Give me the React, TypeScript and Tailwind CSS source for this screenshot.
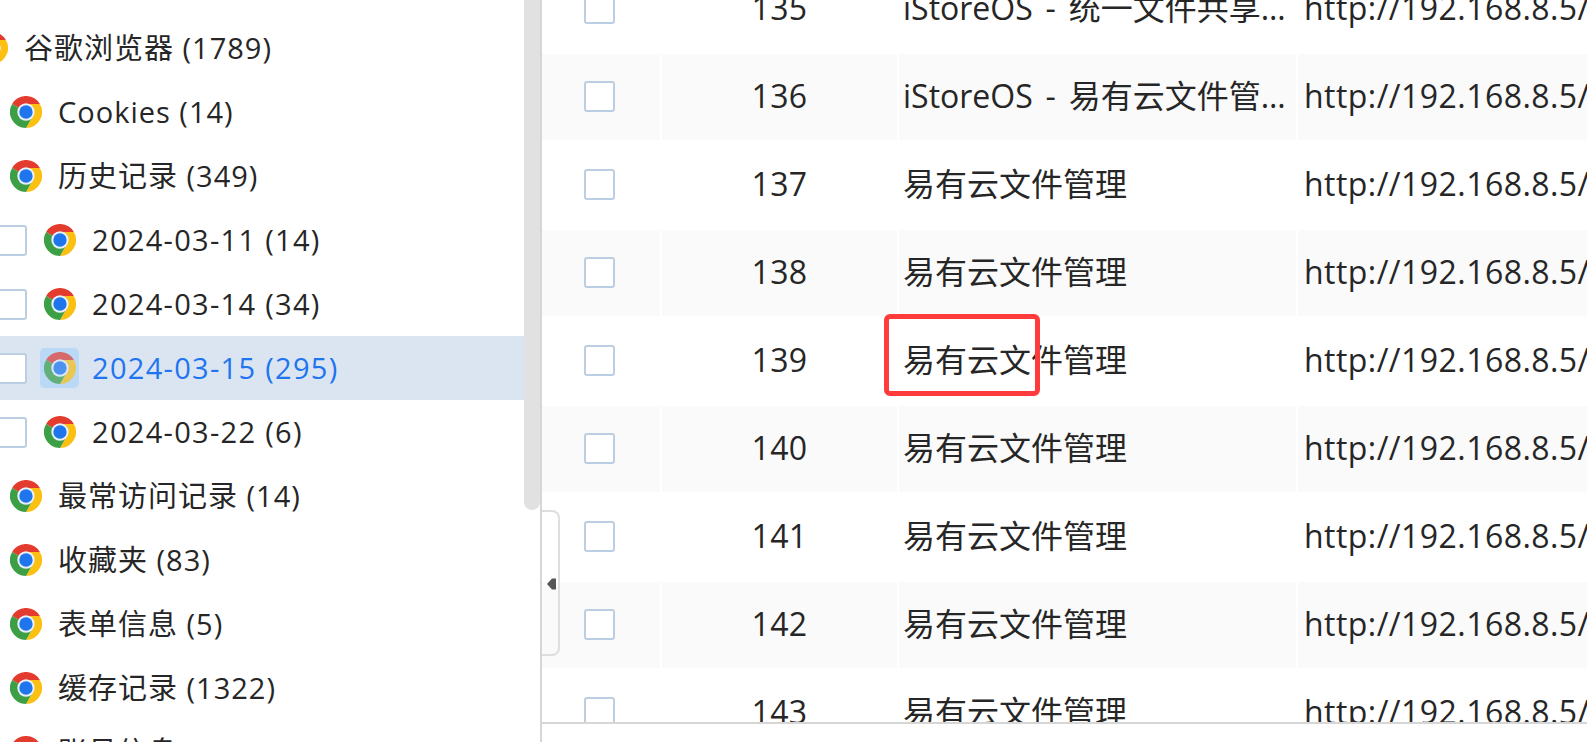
const FONT = "font-['Open_Sans','Noto_Sans_CJK_SC',sans-serif]"

function ChromeIcon() {
  return (
    <svg viewBox="0 0 48 48" className="h-8 w-8 shrink-0" aria-hidden="true">
      <path d="M3.2 12A24 24 0 0 1 44.8 12H24A12 12 0 0 0 13.6 18Z" fill="#e33b2e" />
      <path d="M44.8 12A24 24 0 0 1 24 48L34.4 30A12 12 0 0 0 24 12Z" fill="#fcc012" />
      <path d="M24 48A24 24 0 0 1 3.2 12L13.6 18A12 12 0 0 0 34.4 30Z" fill="#3c9f46" />
      <circle cx="24" cy="24" r="13" fill="#e8f0fa" />
      <circle cx="24" cy="24" r="10" fill="#1f75ec" />
    </svg>
  )
}

function Checkbox({ className = '' }: { className?: string }) {
  return <span className={`block h-[31px] w-[31px] shrink-0 rounded-[3px] border-2 border-[#bccfe2] bg-white ${className}`} />
}

type TreeRow = { label: string; level: 0 | 1 | 2; selected?: boolean }

const treeRows: TreeRow[] = [
  { label: '系统 (2036)', level: 0 },
  { label: '谷歌浏览器 (1789)', level: 0 },
  { label: 'Cookies (14)', level: 1 },
  { label: '历史记录 (349)', level: 1 },
  { label: '2024-03-11 (14)', level: 2 },
  { label: '2024-03-14 (34)', level: 2 },
  { label: '2024-03-15 (295)', level: 2, selected: true },
  { label: '2024-03-22 (6)', level: 2 },
  { label: '最常访问记录 (14)', level: 1 },
  { label: '收藏夹 (83)', level: 1 },
  { label: '表单信息 (5)', level: 1 },
  { label: '缓存记录 (1322)', level: 1 },
  { label: '账号信息 (8)', level: 1 },
]

function Tree() {
  return (
    <div className="-mt-[48px]">
      {treeRows.map((r) => (
        <div key={r.label} className={`flex h-16 items-center text-[29px] whitespace-nowrap ${r.level === 2 ? 'tracking-[1.3px]' : 'tracking-[1px]'} ${r.selected ? 'bg-[#dbe5f1] text-[#1f74f0]' : 'text-[#262626]'}`}>
          {r.level === 0 && (
            <span className="-ml-6 mr-4 flex">
              <ChromeIcon />
            </span>
          )}
          {r.level === 1 && (
            <span className="ml-2.5 mr-4 flex">
              <ChromeIcon />
            </span>
          )}
          {r.level === 2 && (
            <>
              <Checkbox className="-ml-1" />
              <span className={`ml-[13px] mr-[13px] flex h-10 w-[39px] items-center justify-center rounded-[5px] ${r.selected ? 'bg-[#b9d9f6]' : ''}`}>
                <span className={`flex ${r.selected ? 'opacity-70' : ''}`}>
                  <ChromeIcon />
                </span>
              </span>
            </>
          )}
          <span>{r.label}</span>
        </div>
      ))}
    </div>
  )
}

const tableRows = [
  { id: 135, title: 'iStoreOS - 统一文件共享 - 文件管理' },
  { id: 136, title: 'iStoreOS - 易有云文件管理系统' },
  { id: 137, title: '易有云文件管理' },
  { id: 138, title: '易有云文件管理' },
  { id: 139, title: '易有云文件管理' },
  { id: 140, title: '易有云文件管理' },
  { id: 141, title: '易有云文件管理' },
  { id: 142, title: '易有云文件管理' },
  { id: 143, title: '易有云文件管理' },
]

function Table() {
  return (
    <div className="-mt-[35px]">
      {tableRows.map((r, i) => {
        const cell = `flex h-full items-center pb-0.5 ${i % 2 === 1 ? 'bg-[#fafafa]' : ''}`
        return (
          <div key={r.id} className="grid h-[88px] grid-cols-[120px_237px_399px_1fr] border-y border-white text-[32px] text-[#262626]">
            <div className={`${cell} justify-center border-r-2 border-white`}>
              <Checkbox className="-ml-1" />
            </div>
            <div className={`${cell} justify-center border-r-2 border-white tracking-[0.3px]`}>{r.id}</div>
            <div className={`${cell} min-w-0 border-r-2 border-white pl-1 pr-1`}>
              <span className="truncate [word-spacing:4.5px]">{r.title}</span>
            </div>
            <div className={`${cell} overflow-hidden pl-1.5 tracking-[0.45px] whitespace-nowrap`}>http://192.168.8.5/</div>
          </div>
        )
      })}
    </div>
  )
}

export default function App() {
  return (
    <div className={`flex h-[742px] w-full overflow-hidden bg-white ${FONT}`}>
      <div className="relative h-full w-[540px] shrink-0 overflow-hidden">
        <div className="w-[524px]">
          <Tree />
        </div>
        {/* scrollbar thumb */}
        <div className="absolute top-0 right-0 h-[510px] w-4 rounded-b-lg bg-[#e1e1e1]" />
      </div>

      <div className="relative flex h-full min-w-0 flex-1 flex-col border-l-2 border-[#d6d6d6]">
        <div className="h-[722px] shrink-0 overflow-hidden">
          <Table />
        </div>
        <div className="flex-1 border-t-2 border-[#d6d6d6]" />

        {/* collapse handle */}
        <div className="absolute top-[510px] left-0 flex h-[146px] w-[18px] items-center rounded-r-lg border-y-2 border-r-2 border-[#dedede] pl-[5px]">
          <svg viewBox="0 0 9 12" className="mt-[1px] h-3 w-[9px]" aria-hidden="true">
            <polygon points="0,6 5,0.5 9,0.5 9,11.5 5,11.5" fill="#555555" />
          </svg>
        </div>

        {/* red annotation box */}
        <div className="absolute top-[314px] left-[342px] h-[82px] w-[156px] rounded-[6px] border-[5px] border-[#ff3b3b]" />
      </div>
    </div>
  )
}
